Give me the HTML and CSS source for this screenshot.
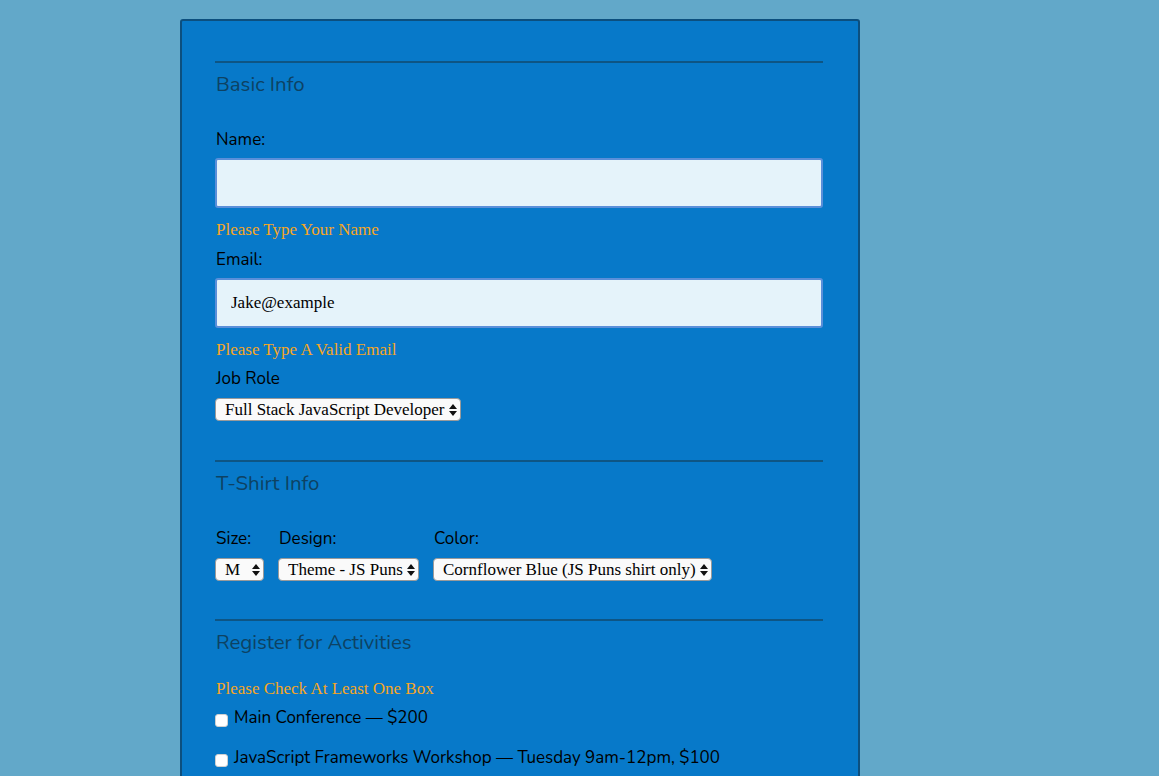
FILE: index.html
```html
<!DOCTYPE html>
<html>
<head>
<meta charset="utf-8">
<link rel="stylesheet" href="styles.css">
</head>
<body>
<form class="card">
  <section class="fs">
    <h2 class="legend">Basic Info</h2>
    <label class="lbl lbl-first">Name:</label>
    <input class="txt" type="text">
    <p class="err">Please Type Your Name</p>
    <label class="lbl lbl-after-err">Email:</label>
    <input class="txt" type="text" value="Jake@example">
    <p class="err">Please Type A Valid Email</p>
    <label class="lbl lbl-role">Job Role</label>
    <span class="sel-wrap">
      <select class="sel"><option>Full Stack JavaScript Developer</option></select>
      <svg class="arrows" width="8" height="12" viewBox="0 0 8 12"><path d="M4 0 L8 5 L0 5 Z M0 7 L8 7 L4 12 Z" fill="#111"/></svg>
    </span>
  </section>
  <section class="fs fs-shirt">
    <h2 class="legend">T-Shirt Info</h2>
    <div class="shirt-row">
      <div class="col">
        <label class="lbl">Size:</label>
        <span class="sel-wrap">
          <select class="sel sel-size"><option>M</option></select>
          <svg class="arrows" width="8" height="12" viewBox="0 0 8 12"><path d="M4 0 L8 5 L0 5 Z M0 7 L8 7 L4 12 Z" fill="#111"/></svg>
        </span>
      </div>
      <div class="col">
        <label class="lbl">Design:</label>
        <span class="sel-wrap">
          <select class="sel"><option>Theme - JS Puns</option></select>
          <svg class="arrows" width="8" height="12" viewBox="0 0 8 12"><path d="M4 0 L8 5 L0 5 Z M0 7 L8 7 L4 12 Z" fill="#111"/></svg>
        </span>
      </div>
      <div class="col">
        <label class="lbl">Color:</label>
        <span class="sel-wrap">
          <select class="sel"><option>Cornflower Blue (JS Puns shirt only)</option></select>
          <svg class="arrows" width="8" height="12" viewBox="0 0 8 12"><path d="M4 0 L8 5 L0 5 Z M0 7 L8 7 L4 12 Z" fill="#111"/></svg>
        </span>
      </div>
    </div>
  </section>
  <section class="fs fs-act">
    <h2 class="legend">Register for Activities</h2>
    <p class="err err-act">Please Check At Least One Box</p>
    <label class="act"><span class="cb"></span>Main Conference — $200</label>
    <label class="act act2"><span class="cb"></span>JavaScript Frameworks Workshop — Tuesday 9am-12pm, $100</label>
  </section>
</form>
</body>
</html>
```

FILE: styles.css
```css
html, body {
  margin: 0;
  padding: 0;
  background: #62a8c9;
  min-height: 100%;
}
body {
  font-family: "Nunito", "Lato", "Noto Sans", sans-serif;
  color: #000;
}
.card {
  display: block;
  box-sizing: border-box;
  margin: 19px 0 0 180px;
  width: 680px;
  min-height: 800px;
  background: #0779c9;
  border: 2px solid #0c4f7e;
  border-radius: 3px;
  padding: 40px 35px 40px 33px;
}
.fs {
  border-top: 2px solid #0e5584;
  margin: 0;
  padding: 0;
  display: flex;
  flex-direction: column;
  align-items: flex-start;
}
.legend {
  margin: 9px 0 0;
  font-size: 20.4px;
  line-height: 24px;
  font-weight: 400;
  color: #0d4263;
  padding-left: 1px;
}
.lbl {
  display: block;
  font-size: 17px;
  line-height: 20px;
  margin: 0 0 8px;
  padding-left: 1px;
}
.lbl-first { margin-top: 34px; }
.lbl-after-err { margin-top: 10px; }
.lbl-role { margin-top: 9px; margin-bottom: 9px; }
.txt {
  box-sizing: border-box;
  width: 608px;
  height: 50px;
  margin: 0;
  border: 2px solid #5a8fd9;
  border-radius: 3px;
  background: #e5f3fa;
  padding: 0 14px;
  font-family: "Liberation Serif", serif;
  font-size: 17px;
  color: #000;
  outline: none;
}
.err {
  margin: 12px 0 0;
  font-family: "Liberation Serif", serif;
  font-size: 17px;
  line-height: 20px;
  color: #f6a623;
  padding-left: 1px;
}
.sel-wrap {
  position: relative;
  display: inline-block;
  line-height: 0;
}
.sel {
  -webkit-appearance: none;
  appearance: none;
  box-sizing: border-box;
  height: 23px;
  margin: 0;
  padding: 0 15px 0 9px;
  border: 1px solid #9a9a9a;
  border-radius: 4px;
  background: #fafafa;
  font-family: "Liberation Serif", serif;
  font-size: 17px;
  line-height: 21px;
  color: #000;
}
.sel-size { width: 49px; }
.arrows {
  position: absolute;
  right: 4px;
  top: 6px;
  pointer-events: none;
}
.fs-shirt { margin-top: 39px; }
.shirt-row {
  display: flex;
  gap: 15px;
  margin-top: 34px;
}
.shirt-row .col + .col { margin-left: -1px; }
.shirt-row .lbl { margin-bottom: 9px; }
.col {
  display: flex;
  flex-direction: column;
  align-items: flex-start;
}
.fs-act { margin-top: 38px; }
.err-act { margin-top: 25px; }
.act {
  display: flex;
  align-items: center;
  font-size: 17px;
  line-height: 20px;
  margin-top: 9px;
}
.act2 { margin-top: 20px; }
.cb {
  display: inline-block;
  box-sizing: border-box;
  width: 13px;
  height: 13px;
  margin: 5px 6px 0 0;
  background: #fff;
  border: 1px solid #d0d0d0;
  border-radius: 3px;
}
```
